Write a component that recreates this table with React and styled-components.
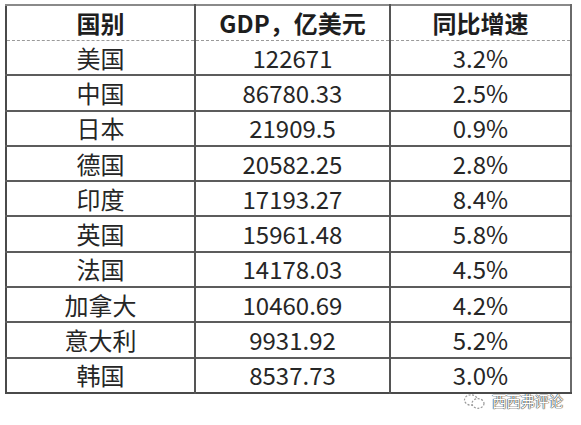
import React from 'react';
import styled, { createGlobalStyle } from 'styled-components';

const rows = [
  ['美国', '122671', '3.2%'],
  ['中国', '86780.33', '2.5%'],
  ['日本', '21909.5', '0.9%'],
  ['德国', '20582.25', '2.8%'],
  ['印度', '17193.27', '8.4%'],
  ['英国', '15961.48', '5.8%'],
  ['法国', '14178.03', '4.5%'],
  ['加拿大', '10460.69', '4.2%'],
  ['意大利', '9931.92', '5.2%'],
  ['韩国', '8537.73', '3.0%'],
];

const Global = createGlobalStyle`
  body {
    margin: 0;
    background: #fff;
    font-family: "Noto Sans CJK SC", "Noto Sans", sans-serif;
  }
`;

const Page = styled.div`
  width: 581px;
  height: 425px;
  padding: 4px 0 0 5px;
  box-sizing: border-box;
  display: flex;
  flex-direction: column;
`;

const Table = styled.table`
  border-collapse: collapse;
  table-layout: fixed;
  width: 567px;
  border-top: 2px solid #8a8a8a;
  border-left: 2px solid #4a4a4a;
  border-right: 2px solid #6a6a6a;
  border-bottom: 2px solid #4a4a4a;
`;

const HeadCell = styled.th`
  height: 34px;
  padding: 0;
  font-size: 24px;
  font-weight: 700;
  line-height: 1;
  color: #1e1e1e;
  text-align: center;
  border-left: 2px solid #555;
  border-bottom: 1px dashed #9a9a9a;
  &:first-child { border-left: none; }
`;

const Cell = styled.td`
  height: 33.3px;
  padding: 0;
  font-size: 24px;
  font-weight: 400;
  color: #262626;
  text-align: center;
  line-height: 1;
  border-left: 2px solid #555;
  border-top: 2px solid #5c5c5c;
  &:first-child { border-left: none; }
`;

const FirstRow = styled.tr`
  & > td { border-top: none; }
`;

const Mark = styled.div`
  display: flex;
  justify-content: flex-end;
  align-items: center;
  gap: 6px;
  padding-right: 18px;
  margin-top: -1px;
  font-size: 14.5px;
  line-height: 16px;
  color: #fff;
  text-shadow: 0 0 1px #333, 0 0 1px #333, 0 0 1px #555;
  letter-spacing: -0.3px;
`;

const ChatIcon = () => (
  <svg width="23" height="17" viewBox="0 0 23 17" fill="none" stroke="#9a9a9a" strokeWidth="1.2" strokeDasharray="2 1.5">
    <ellipse cx="8" cy="7" rx="6.5" ry="5.2" />
    <ellipse cx="15" cy="10.5" rx="6" ry="4.8" fill="#fff" />
  </svg>
);

export default function App() {
  return (
    <Page>
      <Global />
      <Table>
        <colgroup>
          <col style={{ width: 189 }} />
          <col style={{ width: 195 }} />
          <col style={{ width: 181 }} />
        </colgroup>
        <thead>
          <tr>
            <HeadCell>国别</HeadCell>
            <HeadCell>GDP，亿美元</HeadCell>
            <HeadCell>同比增速</HeadCell>
          </tr>
        </thead>
        <tbody>
          {rows.map((r, i) => {
            const Row = i === 0 ? FirstRow : 'tr';
            return (
              <Row key={r[0]}>
                <Cell>{r[0]}</Cell>
                <Cell>{r[1]}</Cell>
                <Cell>{r[2]}</Cell>
              </Row>
            );
          })}
        </tbody>
      </Table>
      <Mark>
        <ChatIcon />
        西西弗评论
      </Mark>
    </Page>
  );
}
